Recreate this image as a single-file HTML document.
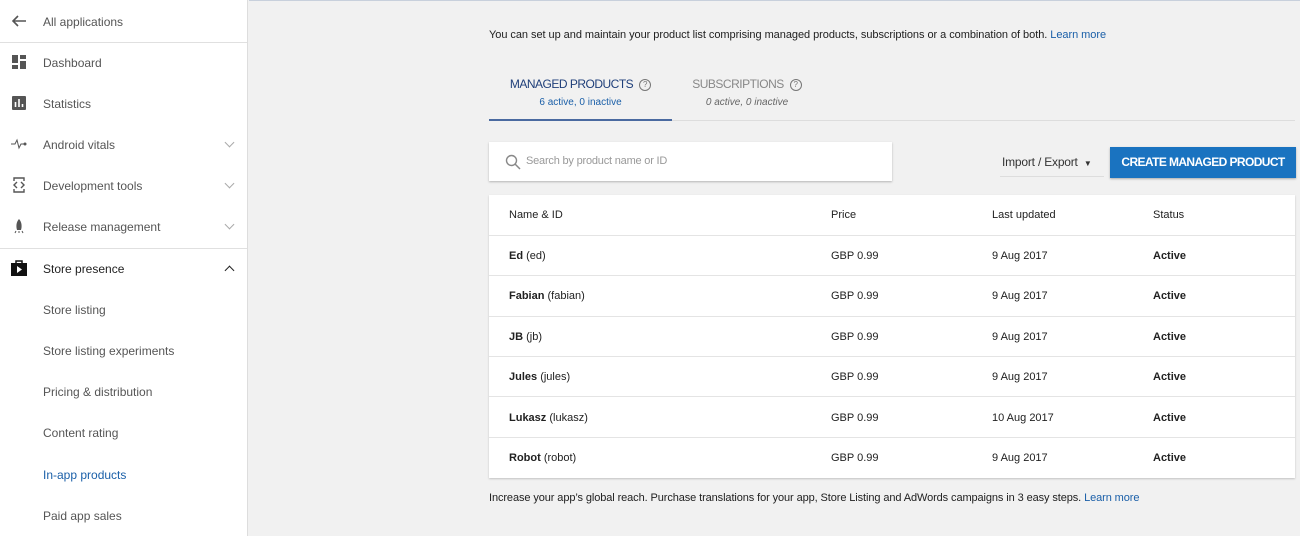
<!DOCTYPE html>
<html><head><style>
*{margin:0;padding:0;box-sizing:border-box}
body{width:1300px;height:536px;overflow:hidden;background:#f1f1f1;font-family:"Liberation Sans",Arial,sans-serif;position:relative;color:#212121}
#side{position:absolute;left:0;top:0;width:248px;height:536px;background:#fff;border-right:1px solid #ddd}
.it{position:absolute;left:0;width:247px;height:41px;font-size:12px;color:#555;}
.it span{position:absolute;left:43px;top:14px}
.it .ic{position:absolute;left:11px;top:12px;width:16px;height:16px}
.chev{position:absolute;left:226px;top:15px;width:7px;height:7px;border-right:1.2px solid #aaa;border-bottom:1.2px solid #aaa;transform:rotate(45deg)}
.div{position:absolute;left:0;width:247px;height:1px;background:#e0e0e0}
#main{position:absolute;left:249px;top:0;right:0;height:536px;border-top:1px solid #c8d0dc}
.abs{position:absolute}
a{color:#1a5fa8;text-decoration:none}
table{border-collapse:collapse;width:806px;font-size:11px}
td{height:40.4px;border-top:1px solid #e4e4e4;padding-left:20px;padding-top:1px}
tr:first-child td{border-top:none}
.q{display:inline-block;width:12px;height:12px;border:1.2px solid #777;border-radius:50%;font-size:8px;text-align:center;line-height:10px;color:#777;vertical-align:1px;margin-left:6px;font-weight:normal;letter-spacing:0}
</style></head><body>
<div id="side">
 <div class="it" style="top:1px"><svg class="ic" viewBox="0 0 16 16"><path d="M15 8H2M7 3L2 8l5 5" stroke="#555" stroke-width="1.6" fill="none"/></svg><span>All applications</span></div>
 <div class="div" style="top:42px"></div>
 <div class="it" style="top:42px"><svg class="ic" viewBox="0 0 16 16"><rect x="1" y="1" width="6" height="8" fill="#555"/><rect x="9" y="1" width="6" height="4" fill="#555"/><rect x="1" y="11" width="6" height="4" fill="#555"/><rect x="9" y="7" width="6" height="8" fill="#555"/></svg><span>Dashboard</span></div>
 <div class="it" style="top:83px"><svg class="ic" viewBox="0 0 16 16"><rect x="1" y="1" width="14" height="14" rx="1" fill="#555"/><path d="M4.5 12V7M8 12V4M11.5 12V9" stroke="#fff" stroke-width="1.6"/></svg><span>Statistics</span></div>
 <div class="it" style="top:124px"><svg class="ic" viewBox="0 0 16 16"><path d="M0 8h4l2-4 2 8 2-4h3" stroke="#555" stroke-width="1" fill="none"/><circle cx="14" cy="8" r="1.5" fill="#555"/></svg><span>Android vitals</span><div class="chev"></div></div>
 <div class="it" style="top:165px"><svg class="ic" viewBox="0 0 16 16"><path d="M3 4V1h10v3M3 12v3h10v-3M6 5L3 8l3 3M10 5l3 3-3 3" stroke="#555" stroke-width="1.4" fill="none"/></svg><span>Development tools</span><div class="chev"></div></div>
 <div class="it" style="top:206px"><svg class="ic" viewBox="0 0 16 16"><path d="M8 1c3 3 3 8 2 11H6C5 9 5 4 8 1z" fill="#555"/><path d="M5 13l-1 2M11 13l1 2M8 13v2" stroke="#555"/></svg><span>Release management</span><div class="chev"></div></div>
 <div class="div" style="top:248px"></div>
 <div class="it" style="top:248px;color:#222"><svg class="ic" viewBox="0 0 16 16"><path d="M5 3V1h6v2" stroke="#111" stroke-width="1.5" fill="none"/><rect x="0" y="3" width="16" height="13" fill="#111"/><path d="M6 6v7l5-3.5z" fill="#fff"/></svg><span>Store presence</span><div class="chev" style="transform:rotate(225deg);top:19px;border-color:#222;border-width:1.8px"></div></div>
 <div class="it" style="top:289px"><span>Store listing</span></div>
 <div class="it" style="top:330px"><span>Store listing experiments</span></div>
 <div class="it" style="top:371px"><span>Pricing &amp; distribution</span></div>
 <div class="it" style="top:412px"><span>Content rating</span></div>
 <div class="it" style="top:454px;color:#1a5fa8"><span>In-app products</span></div>
 <div class="it" style="top:495px"><span>Paid app sales</span></div>
</div>
<div id="main"></div>
<div class="abs" style="left:489px;top:29px;font-size:11px;letter-spacing:-0.05px">You can set up and maintain your product list comprising managed products, subscriptions or a combination of both. <a>Learn more</a></div>
<div class="abs" style="left:489px;top:120px;width:806px;height:1px;background:#ddd"></div>
<div class="abs" style="left:489px;top:119px;width:183px;height:2px;background:#4a6aa0"></div>
<div class="abs" style="left:489px;top:77px;width:183px;text-align:center;font-size:12px;color:#1f3f7a;letter-spacing:-0.5px">MANAGED PRODUCTS<span class="q">?</span></div>
<div class="abs" style="left:489px;top:97px;width:183px;text-align:center;font-size:10px;color:#1a5fa8">6 active, 0 inactive</div>
<div class="abs" style="left:662px;top:77px;width:170px;text-align:center;font-size:12px;color:#888;letter-spacing:-0.5px">SUBSCRIPTIONS<span class="q">?</span></div>
<div class="abs" style="left:662px;top:97px;width:170px;text-align:center;font-size:10px;color:#666;font-style:italic">0 active, 0 inactive</div>
<div class="abs" style="left:489px;top:142px;width:403px;height:39px;background:#fff;box-shadow:0 1px 2px rgba(0,0,0,.25)">
 <svg class="abs" style="left:16px;top:12px" width="16" height="16" viewBox="0 0 16 16"><circle cx="6.5" cy="6.5" r="5" stroke="#888" stroke-width="1.4" fill="none"/><path d="M10 10l5 5" stroke="#888" stroke-width="1.5"/></svg>
 <div class="abs" style="left:37px;top:13px;font-size:11px;color:#999;letter-spacing:-0.2px">Search by product name or ID</div>
</div>
<div class="abs" style="left:1000px;top:155px;width:104px;height:22px;border-bottom:1px solid #ddd;font-size:12px;color:#333;padding-left:2px;letter-spacing:-0.2px">Import / Export <span style="font-size:8px;margin-left:3px">▼</span></div>
<div class="abs" style="left:1110px;top:147px;width:186px;height:31px;background:#1a73c0;color:#fff;font-size:12px;font-weight:bold;text-align:center;line-height:31px;box-shadow:0 1px 2px rgba(0,0,0,.3);letter-spacing:-0.6px">CREATE MANAGED PRODUCT</div>
<div class="abs" style="left:489px;top:195px;background:#fff;box-shadow:0 1px 2px rgba(0,0,0,.2)">
<table>
<tr><td style="width:322px">Name &amp; ID</td><td style="width:161px">Price</td><td style="width:161px">Last updated</td><td>Status</td></tr>
<tr><td><b>Ed</b> (ed)</td><td>GBP 0.99</td><td>9 Aug 2017</td><td><b>Active</b></td></tr>
<tr><td><b>Fabian</b> (fabian)</td><td>GBP 0.99</td><td>9 Aug 2017</td><td><b>Active</b></td></tr>
<tr><td><b>JB</b> (jb)</td><td>GBP 0.99</td><td>9 Aug 2017</td><td><b>Active</b></td></tr>
<tr><td><b>Jules</b> (jules)</td><td>GBP 0.99</td><td>9 Aug 2017</td><td><b>Active</b></td></tr>
<tr><td><b>Lukasz</b> (lukasz)</td><td>GBP 0.99</td><td>10 Aug 2017</td><td><b>Active</b></td></tr>
<tr><td><b>Robot</b> (robot)</td><td>GBP 0.99</td><td>9 Aug 2017</td><td><b>Active</b></td></tr>
</table></div>
<div class="abs" style="left:489px;top:492px;font-size:11px;letter-spacing:-0.1px">Increase your app’s global reach. Purchase translations for your app, Store Listing and AdWords campaigns in 3 easy steps. <a>Learn more</a></div>
</body></html>
